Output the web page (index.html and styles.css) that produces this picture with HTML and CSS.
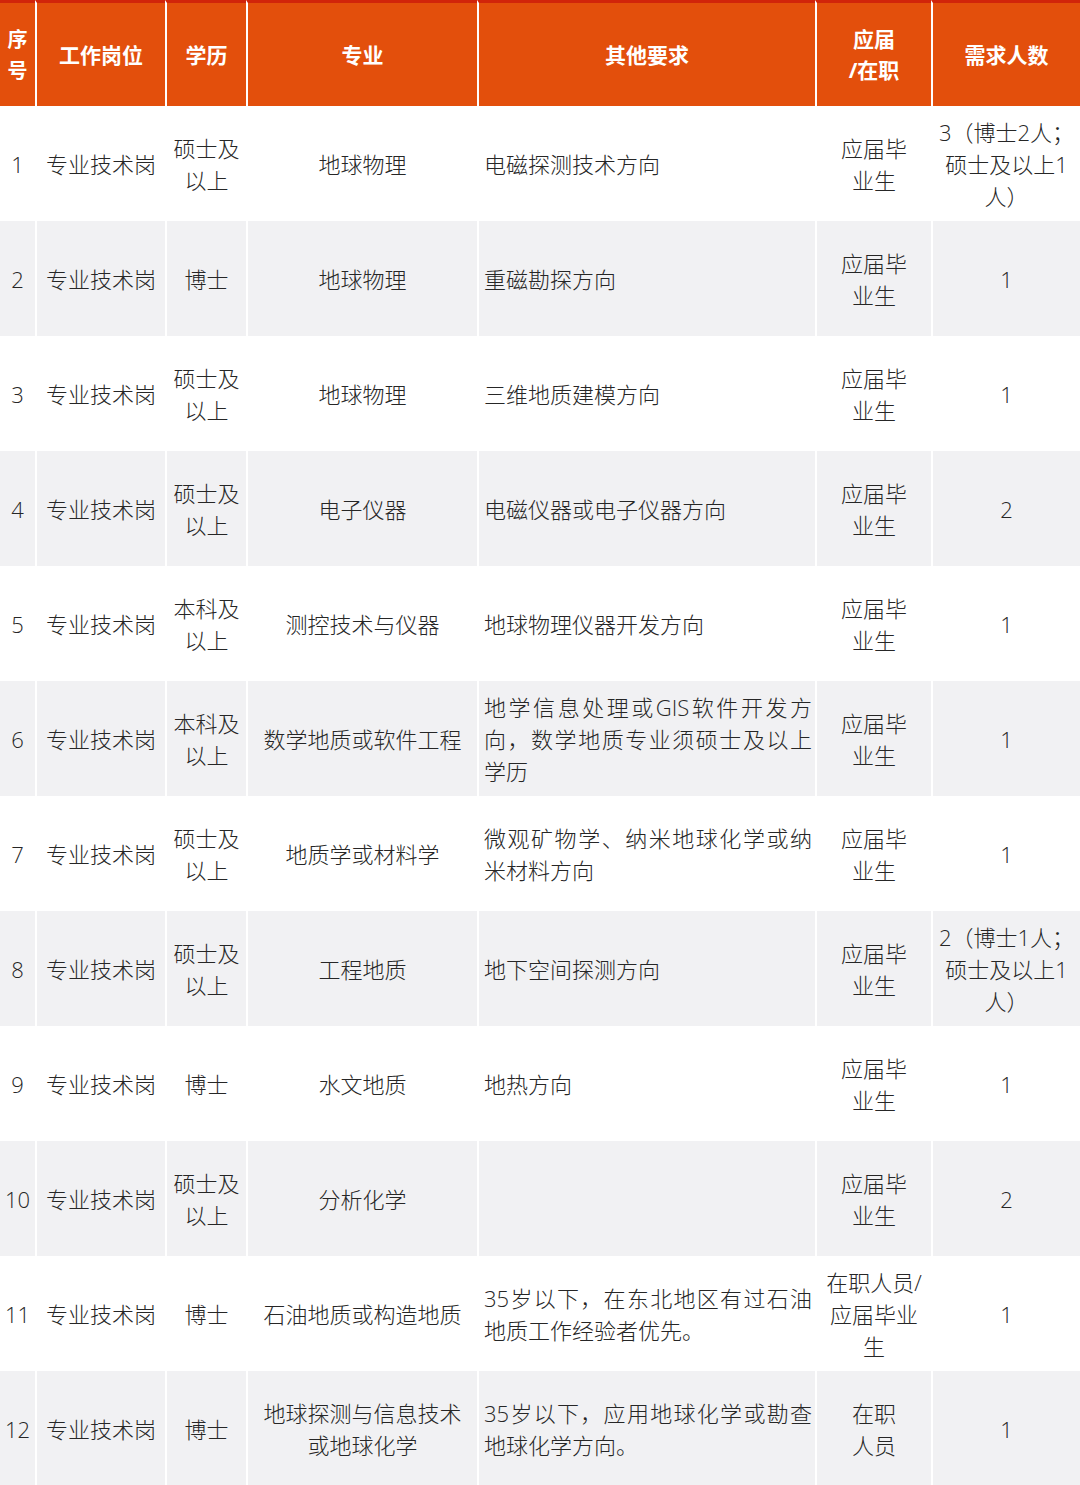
FILE: index.html
```html
<!DOCTYPE html>
<html lang="zh-CN">
<head>
<meta charset="utf-8">
<title>招聘岗位</title>
<link rel="stylesheet" href="styles.css">
</head>
<body>
<table class="jobs">
  <colgroup>
    <col class="c1"><col class="c2"><col class="c3"><col class="c4"><col class="c5"><col class="c6"><col class="c7">
  </colgroup>
  <thead>
    <tr>
      <th class="narrow">序<br>号</th>
      <th>工作岗位</th>
      <th>学历</th>
      <th>专业</th>
      <th>其他要求</th>
      <th>应届<br>/在职</th>
      <th>需求人数</th>
    </tr>
  </thead>
  <tbody>
    <tr>
      <td>1</td><td>专业技术岗</td><td>硕士及<br>以上</td><td>地球物理</td>
      <td class="req">电磁探测技术方向</td>
      <td>应届毕<br>业生</td><td>3（博士2人；<br>硕士及以上1<br>人）</td>
    </tr>
    <tr class="alt">
      <td>2</td><td>专业技术岗</td><td>博士</td><td>地球物理</td>
      <td class="req">重磁勘探方向</td>
      <td>应届毕<br>业生</td><td>1</td>
    </tr>
    <tr>
      <td>3</td><td>专业技术岗</td><td>硕士及<br>以上</td><td>地球物理</td>
      <td class="req">三维地质建模方向</td>
      <td>应届毕<br>业生</td><td>1</td>
    </tr>
    <tr class="alt">
      <td>4</td><td>专业技术岗</td><td>硕士及<br>以上</td><td>电子仪器</td>
      <td class="req">电磁仪器或电子仪器方向</td>
      <td>应届毕<br>业生</td><td>2</td>
    </tr>
    <tr>
      <td>5</td><td>专业技术岗</td><td>本科及<br>以上</td><td>测控技术与仪器</td>
      <td class="req">地球物理仪器开发方向</td>
      <td>应届毕<br>业生</td><td>1</td>
    </tr>
    <tr class="alt">
      <td>6</td><td>专业技术岗</td><td>本科及<br>以上</td><td>数学地质或软件工程</td>
      <td class="req"><span class="jl">地学信息处理或GIS软件开发方</span><span class="jl">向，数学地质专业须硕士及以上</span><span class="ln">学历</span></td>
      <td>应届毕<br>业生</td><td>1</td>
    </tr>
    <tr>
      <td>7</td><td>专业技术岗</td><td>硕士及<br>以上</td><td>地质学或材料学</td>
      <td class="req"><span class="jl">微观矿物学、纳米地球化学或纳</span><span class="ln">米材料方向</span></td>
      <td>应届毕<br>业生</td><td>1</td>
    </tr>
    <tr class="alt">
      <td>8</td><td>专业技术岗</td><td>硕士及<br>以上</td><td>工程地质</td>
      <td class="req">地下空间探测方向</td>
      <td>应届毕<br>业生</td><td>2（博士1人；<br>硕士及以上1<br>人）</td>
    </tr>
    <tr>
      <td>9</td><td>专业技术岗</td><td>博士</td><td>水文地质</td>
      <td class="req">地热方向</td>
      <td>应届毕<br>业生</td><td>1</td>
    </tr>
    <tr class="alt">
      <td>10</td><td>专业技术岗</td><td>硕士及<br>以上</td><td>分析化学</td>
      <td class="req"></td>
      <td>应届毕<br>业生</td><td>2</td>
    </tr>
    <tr>
      <td>11</td><td>专业技术岗</td><td>博士</td><td>石油地质或构造地质</td>
      <td class="req"><span class="jl">35岁以下，在东北地区有过石油</span><span class="ln">地质工作经验者优先。</span></td>
      <td>在职人员/<br>应届毕业<br>生</td><td>1</td>
    </tr>
    <tr class="alt">
      <td>12</td><td>专业技术岗</td><td>博士</td><td>地球探测与信息技术<br>或地球化学</td>
      <td class="req"><span class="jl">35岁以下，应用地球化学或勘查</span><span class="ln">地球化学方向。</span></td>
      <td>在职<br>人员</td><td>1</td>
    </tr>
  </tbody>
</table>
</body>
</html>
```

FILE: styles.css
```css
html, body {
  margin: 0;
  padding: 0;
  background: #ffffff;
}

.jobs {
  width: 1080px;
  border-collapse: separate;
  border-spacing: 0;
  table-layout: fixed;
  font-family: "Open Sans", "Noto Sans CJK SC", sans-serif;
  font-size: 22px;
  font-weight: 300;
  line-height: 32px;
  color: #262626;
}

.c1 { width: 35px; }
.c2 { width: 130px; }
.c3 { width: 81px; }
.c4 { width: 231px; }
.c5 { width: 338px; }
.c6 { width: 116px; }
.c7 { width: 149px; }

.jobs th,
.jobs td {
  padding: 0;
  text-align: center;
  vertical-align: middle;
  border-left: 2px solid #ffffff;
  box-sizing: border-box;
}

.jobs th:first-child,
.jobs td:first-child {
  border-left: 0;
}

.jobs thead tr {
  height: 106px;
}

.jobs th {
  height: 106px;
  background: #e34f0c;
  color: #ffffff;
  font-weight: 700;
  font-size: 21px;
  line-height: 31px;
  border-top: 3px solid #d1240a;
  padding-top: 1px;
}

.jobs th.narrow {
  font-size: 20px;
}

.jobs tbody tr {
  height: 115px;
}

.jobs tbody td {
  height: 115px;
}

.jobs tbody tr.alt td {
  background: #f1f1f3;
}

.jobs td.req {
  text-align: left;
  padding: 0 3px 0 5px;
}

.jl {
  display: block;
  text-align: justify;
  text-align-last: justify;
}

.ln {
  display: block;
}
```
